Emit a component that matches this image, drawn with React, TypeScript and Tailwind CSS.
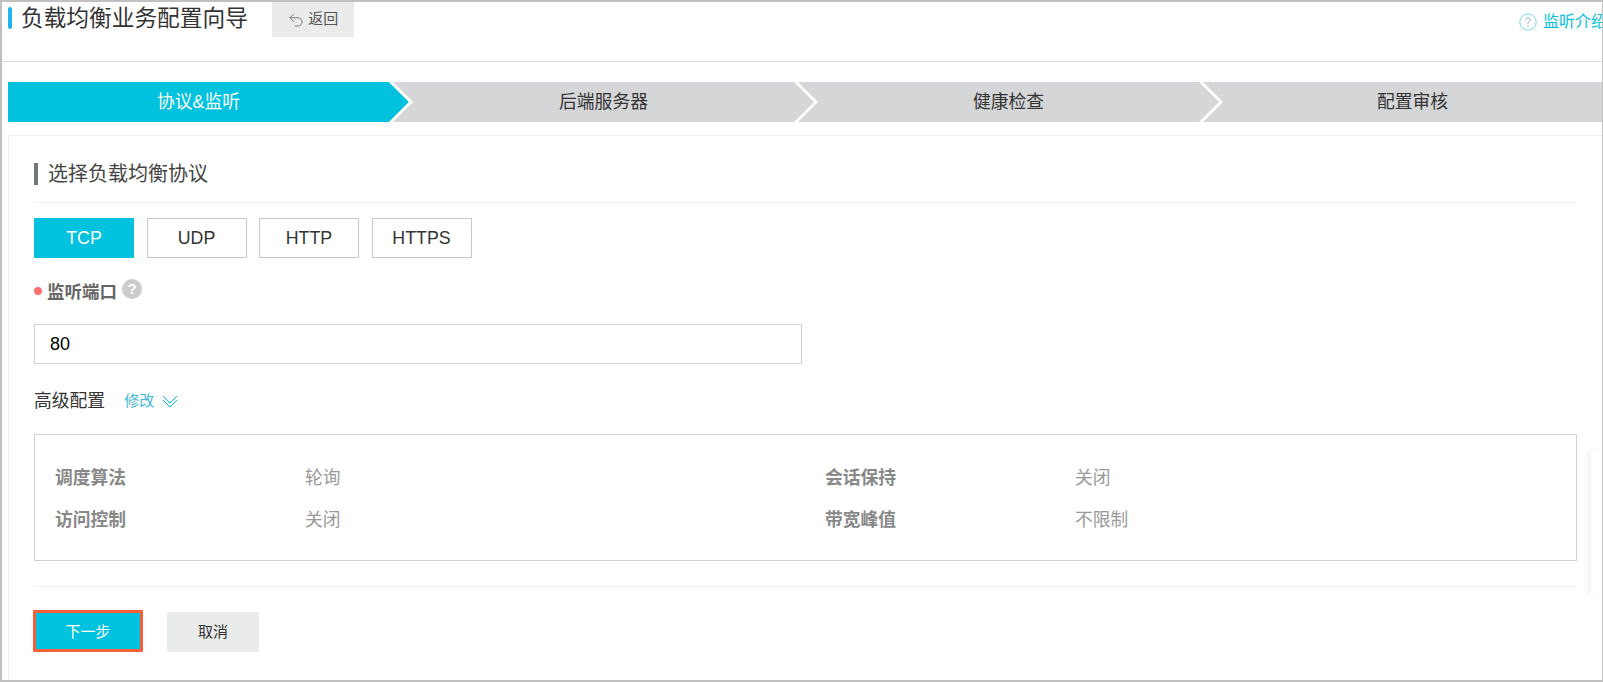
import { Undo2 } from 'lucide-react';

const font = '[font-family:"Liberation_Sans","Noto_Sans_CJK_SC",sans-serif]';

const protocols = ['TCP', 'UDP', 'HTTP', 'HTTPS'];
const steps = ['协议&监听', '后端服务器', '健康检查', '配置审核'];

function StepArrow({ active }: { active: boolean }) {
    return (
        <svg width="24" height="40" viewBox="0 0 24 40" className="shrink-0 block">
            <polygon points="0,0 20,20 0,40" fill={active ? '#00c1de' : '#d5d6d8'} />
            <polygon points="0,0 4,0 24,20 4,40 0,40 20,20" fill="#ffffff" />
        </svg>
    );
}

function Detail({ label, value }: { label: string; value: string }) {
    return (
        <div className="flex h-[42px] items-center pt-[3px]">
            <span className="w-[250px] text-[17.800px] font-bold text-[#888888]">{label}</span>
            <span className="text-[17.800px] text-[#999999]">{value}</span>
        </div>
    );
}

export default function App() {
    return (
        <div className={`${font} h-[682px] w-full overflow-hidden border-t-2 border-b-2 border-l-2 border-r border-[#c0c0c0] bg-white`}>
            <header className="flex h-[60px] border-b border-[#dddddd] pl-[6px]">
                <div className="mt-[5px] h-[22px] w-[4px] rounded-sm bg-[#1eb4f0]" />
                <h1 className="ml-[9px] text-[22.700px] leading-[33px] text-[#333333]">负载均衡业务配置向导</h1>
                <button className="ml-[24px] flex h-[35px] w-[82px] items-center justify-center gap-[3px] bg-[#eaebeb] text-[15px] text-[#555555]">
                    <Undo2 size={18} strokeWidth={1} />
                    返回
                </button>
                <a className="ml-auto mt-[11px] flex h-[18px] items-center gap-[6px] whitespace-nowrap text-[16px] text-[#00c1de]">
                    <svg width="18" height="18" viewBox="0 0 18 18" fill="none" className="shrink-0">
                        <circle cx="9" cy="9" r="8.2" stroke="#7fd6ea" strokeWidth="1" />
                        <path d="M6.7 7.2c0-1.4 1-2.3 2.3-2.3s2.3.9 2.3 2.1c0 1.800-2.300 1.800-2.300 3.800" stroke="#7fb8c8" strokeWidth="1" />
                        <circle cx="9" cy="13" r=".7" fill="#7fb8c8" />
                    </svg>
                    <span className="w-[59px] overflow-hidden">监听介绍</span>
                </a>
            </header>

            <div className="ml-[6px] mt-[20px] flex h-[40px] bg-[#d5d6d8] text-[17.800px] text-[#333333]">
                {steps.map((step, i) => (
                    <div key={step} className={i === 3 ? 'flex flex-1' : 'flex'}>
                        <div className={`flex items-center justify-center pt-[1px] ${i === 3 ? 'flex-1' : 'w-[381px]'} ${i === 0 ? 'w-[380px] bg-[#00c1de] text-white' : ''}`}>
                            {step}
                        </div>
                        {i < 3 && <StepArrow active={i === 0} />}
                    </div>
                ))}
            </div>

            <main className="ml-[6px] mt-[13px] h-[545px] border-t border-l border-[#eeeeee] pl-[25px] pr-[25px]">
                <div className="flex h-[67px] items-start border-b border-[#f2f2f2] pt-[27px]">
                    <div className="h-[22px] w-[4px] bg-[#73777a]" />
                    <h2 className="ml-[10px] text-[20px] leading-[22px] text-[#444444]">选择负载均衡协议</h2>
                </div>

                <div className="mt-[15px] flex gap-[12.500px]">
                    {protocols.map((p, i) => (
                        <button
                            key={p}
                            className={`h-[40px] w-[100px] text-[17.800px] ${i === 0 ? 'bg-[#00c1de] text-white' : 'border border-[#c8c8c8] text-[#333333]'}`}
                        >
                            {p}
                        </button>
                    ))}
                </div>

                <div className="mt-[21px] flex h-[20px] items-center">
                    <span className="mt-[3px] h-[8px] w-[8px] rounded-full bg-[#ff7070]" />
                    <label className="ml-[5px] mt-[7px] text-[17.500px] font-bold text-[#666666]">监听端口</label>
                    <span className="ml-[5px] flex h-[20px] w-[20px] items-center justify-center rounded-full bg-[#cccccc] text-[15px] font-bold text-white">?</span>
                </div>

                <div className="mt-[25px] flex h-[40px] w-[768px] items-center border border-[#d0d0d0] pl-[15px] text-[18px] text-black">80</div>

                <div className="mt-[24px] flex h-[26px] items-center">
                    <span className="text-[17.800px] text-[#333333]">高级配置</span>
                    <a className="ml-[19px] text-[15px] text-[#3fb8d8]">修改</a>
                    <svg width="16" height="14" viewBox="0 0 16 14" fill="none" className="ml-[8px] mt-[2px]" stroke="#00c1de" strokeWidth="1">
                        <path d="M1 1l7 7 7-7" />
                        <path d="M1 5l7 7 7-7" />
                    </svg>
                </div>

                <div className="mt-[20px] grid h-[127px] grid-cols-[770px_1fr] content-center border border-[#d0d0d0] pl-[20px]">
                    <Detail label="调度算法" value="轮询" />
                    <Detail label="会话保持" value="关闭" />
                    <Detail label="访问控制" value="关闭" />
                    <Detail label="带宽峰值" value="不限制" />
                </div>

                <div className="mt-[25px] border-t border-[#f2f2f2] pt-[23px]">
                    <div className="flex items-end">
                        <button className="-ml-[1px] h-[42px] w-[110px] rounded-[1px] border-[3px] border-[#f5603a] bg-[#00c1de] pt-[3px] text-[15px] text-white">下一步</button>
                        <button className="ml-[24px] h-[40px] w-[92px] bg-[#eaebeb] text-[15px] text-[#333333]">取消</button>
                    </div>
                </div>
            </main>

            {/* side panel peeking in from the right edge */}
            <div className="absolute right-[1px] top-[450px] h-[146px] w-[11px] bg-white shadow-[-3px_0_8px_rgba(0,0,0,0.05)]" />
        </div>
    );
}
